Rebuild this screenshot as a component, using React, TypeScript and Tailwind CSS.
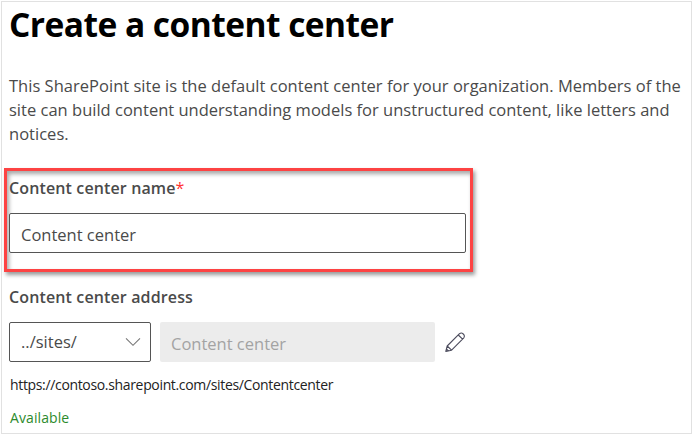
export default function App() {
  return (
    <main className="h-[434px] w-[692px] bg-white pt-px pl-px font-['Open_Sans','Noto_Sans',sans-serif] text-[#4a4a4a]">
      <div className="flex h-[433px] w-[691px] flex-col border border-[#e1e1e1] pl-[2px] whitespace-nowrap">
        <h1 className="ml-[5px] h-[44px] text-[33.5px] leading-[44px] font-bold tracking-[-0.53px] text-black">Create a content center</h1>
        <div className="mt-[28px] ml-[5px] text-[16.5px] leading-[24px]">
          <p className="tracking-[0.02px]">This SharePoint site is the default content center for your organization. Members of the</p>
          <p className="tracking-[0.01px]">site can build content understanding models for unstructured content, like letters and</p>
          <p className="tracking-[0.02px]">notices.</p>
        </div>
        <section className="mt-[22px] h-[104px] w-[469px] border-[3px] border-[#fd4343] pt-[5px] pl-[2px] shadow-[2px_3px_4px_rgba(0,0,0,0.4),inset_2px_3px_4px_rgba(0,0,0,0.35)]">
          <label htmlFor="name" className="block h-[24px] text-[16px] leading-[24px] font-semibold tracking-[0.13px]">Content center name<span className="font-normal text-[#f33]">*</span></label>
          <div id="name" className="mt-[13px] flex h-[40px] w-[457px] items-center rounded-[2px] border border-[#555] bg-white pt-[4px] pl-[11px] text-[16.5px]">
            <span>Content center</span>
          </div>
        </section>
        <h2 className="mt-[13px] ml-[5px] h-[24px] text-[16px] leading-[24px] font-semibold tracking-[0.13px]">Content center address</h2>
        <div className="mt-[13px] ml-[5px] flex h-[40px] items-center text-[16.5px]">
          <div className="flex h-[40px] w-[142px] items-center justify-between rounded-[2px] border border-[#555] pr-[9px] pl-[11px]">
            <span>../sites/</span>
            <svg width="16" height="10" viewBox="0 0 16 10" fill="none" stroke="#777" strokeWidth="1.1"><path d="M1 1.3 8 8.3 15 1.3" /></svg>
          </div>
          <div className="ml-[9px] flex h-[40px] w-[275px] items-center rounded-[2px] bg-[#ececec] pt-[4px] pl-[11px] text-[#a3a3a3]">
            <span>Content center</span>
          </div>
          <svg className="ml-[10px]" width="21" height="21" viewBox="0 0 21 21" fill="none" stroke="#4b4b5c" strokeWidth="1.1" strokeLinejoin="round">
            <path d="M.8 19.5 2.2 14 14.5 1.7C17-.2 20.6 3 18.8 5.8L6.6 18.2Z M2.2 14 6.6 18.2 M13.3 3 17.6 7.2 M1.5 17.1 3.6 19" />
          </svg>
        </div>
        <p className="mt-[13px] ml-[6px] h-[20px] text-[14px] leading-[20px] tracking-[-0.34px] text-[#222]">https://contoso.sharepoint.com/sites/Contentcenter</p>
        <p className="mt-[13px] ml-[6px] h-[20px] text-[14px] leading-[20px] tracking-[0.1px] text-[#2c8a2c]">Available</p>
      </div>
    </main>
  );
}
